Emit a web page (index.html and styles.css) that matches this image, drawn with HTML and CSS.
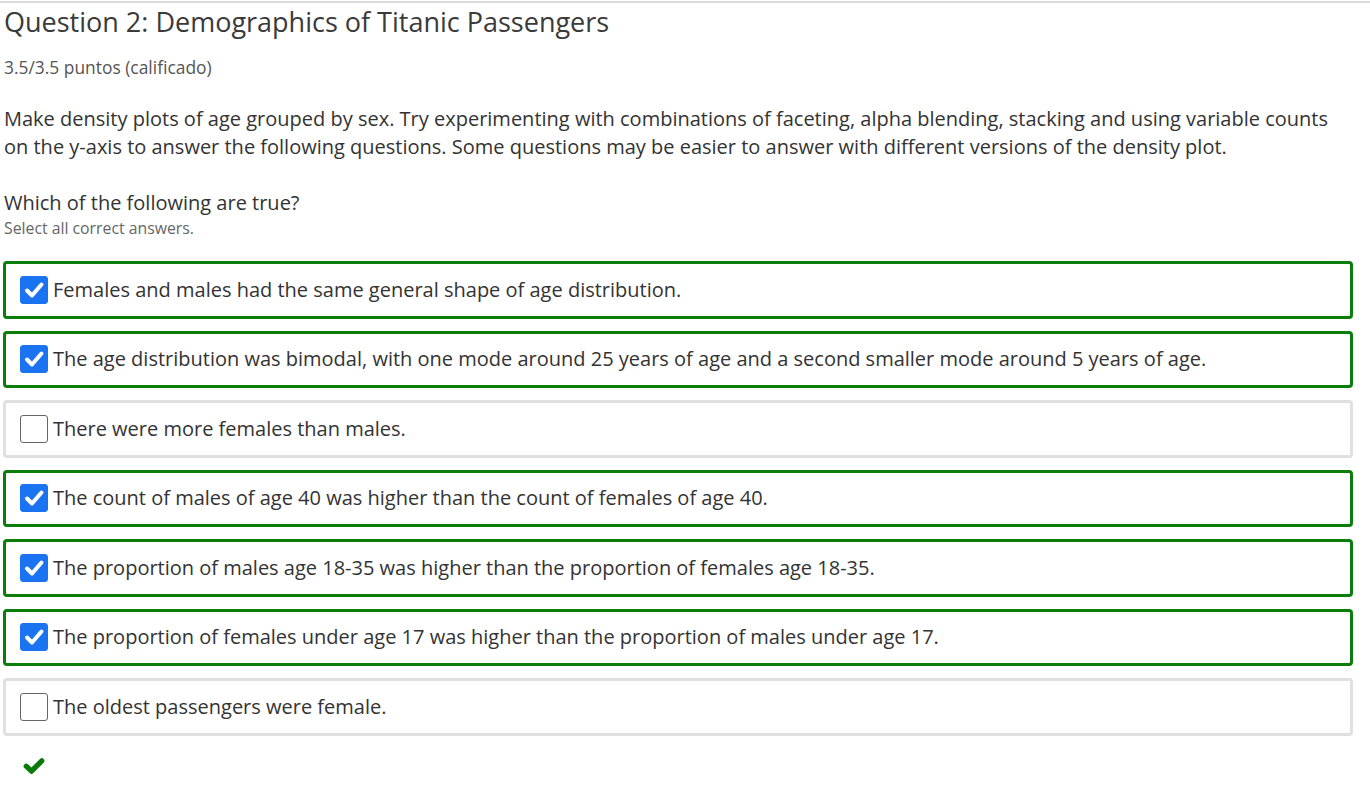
FILE: index.html
```html
<!DOCTYPE html>
<html>
<head>
<meta charset="utf-8">
<link rel="stylesheet" href="styles.css">
</head>
<body>
<div class="topline"></div>
<div class="question">
  <h2 class="title">Question 2: Demographics of Titanic Passengers</h2>
  <div class="points">3.5/3.5 puntos (calificado)</div>
  <p class="prompt">Make density plots of age grouped by sex. Try experimenting with combinations of faceting, alpha blending, stacking and using variable counts on the y-axis to answer the following questions. Some questions may be easier to answer with different versions of the density plot.</p>
  <div class="ask">Which of the following are true?</div>
  <div class="hint">Select all correct answers.</div>
  <div class="options">
    <div class="option correct"><span class="box checked"><svg viewBox="0 0 28 28" width="28" height="28"><path d="M7 14.5 L12 19.5 L21.5 8.5" fill="none" stroke="#fff" stroke-width="4" stroke-linecap="round" stroke-linejoin="round"/></svg></span><span class="label">Females and males had the same general shape of age distribution.</span></div>
    <div class="option correct"><span class="box checked"><svg viewBox="0 0 28 28" width="28" height="28"><path d="M7 14.5 L12 19.5 L21.5 8.5" fill="none" stroke="#fff" stroke-width="4" stroke-linecap="round" stroke-linejoin="round"/></svg></span><span class="label">The age distribution was bimodal, with one mode around 25 years of age and a second smaller mode around 5 years of age.</span></div>
    <div class="option"><span class="box"></span><span class="label">There were more females than males.</span></div>
    <div class="option correct"><span class="box checked"><svg viewBox="0 0 28 28" width="28" height="28"><path d="M7 14.5 L12 19.5 L21.5 8.5" fill="none" stroke="#fff" stroke-width="4" stroke-linecap="round" stroke-linejoin="round"/></svg></span><span class="label">The count of males of age 40 was higher than the count of females of age 40.</span></div>
    <div class="option correct"><span class="box checked"><svg viewBox="0 0 28 28" width="28" height="28"><path d="M7 14.5 L12 19.5 L21.5 8.5" fill="none" stroke="#fff" stroke-width="4" stroke-linecap="round" stroke-linejoin="round"/></svg></span><span class="label">The proportion of males age 18-35 was higher than the proportion of females age 18-35.</span></div>
    <div class="option correct"><span class="box checked"><svg viewBox="0 0 28 28" width="28" height="28"><path d="M7 14.5 L12 19.5 L21.5 8.5" fill="none" stroke="#fff" stroke-width="4" stroke-linecap="round" stroke-linejoin="round"/></svg></span><span class="label">The proportion of females under age 17 was higher than the proportion of males under age 17.</span></div>
    <div class="option"><span class="box"></span><span class="label">The oldest passengers were female.</span></div>
  </div>
  <div class="result"><svg viewBox="0 0 22 18" width="22" height="18"><path d="M3.2 9.2 L8.5 14.2 L18.8 3.8" fill="none" stroke="#087a08" stroke-width="5.2" stroke-linecap="round" stroke-linejoin="round"/></svg></div>
</div>
</body>
</html>
```

FILE: styles.css
```css
html, body {
  margin: 0;
  padding: 0;
  background: #fff;
}
body {
  font-family: "Open Sans", "Noto Sans", sans-serif;
  color: #333;
}
.topline {
  height: 2px;
  margin-top: 1px;
  background: #dcdcdc;
}
.question {
  padding: 0 17px 0 3px;
}
.title {
  margin: 0;
  padding-left: 1px;
  font-size: 27px;
  font-weight: 400;
  line-height: 38px;
  color: #3a3a3a;
}
.points {
  margin-top: 15px;
  padding-left: 1px;
  font-size: 17.4px;
  line-height: 22px;
  color: #555;
}
.prompt {
  margin: 27px 0 0;
  padding-left: 1px;
  font-size: 20px;
  line-height: 28px;
  color: #333;
}
.ask {
  margin-top: 28px;
  padding-left: 1px;
  font-size: 20px;
  line-height: 28px;
  color: #333;
}
.hint {
  padding-left: 1px;
  font-size: 15.8px;
  line-height: 22px;
  color: #666;
}
.options {
  margin-top: 22px;
  display: flex;
  flex-direction: column;
  gap: 12px;
}
.option {
  box-sizing: border-box;
  height: 57.5px;
  border: 3px solid #e0e0e0;
  border-radius: 4px;
  display: flex;
  align-items: center;
  padding-left: 14px;
}
.option.correct {
  border-color: #0a7d0a;
}
.box {
  box-sizing: border-box;
  width: 28px;
  height: 28px;
  border: 1px solid #666;
  border-radius: 3px;
  flex: none;
  display: flex;
  margin-right: 5px;
}
.box.checked {
  background: #1a73f0;
  border-color: #1a73f0;
}
.box svg {
  display: block;
  margin: -1px;
}
.label {
  font-size: 20px;
  line-height: 28px;
  color: #333;
}
.result {
  margin-top: 21px;
  padding-left: 20px;
  height: 20px;
}
.result svg {
  display: block;
}
```
